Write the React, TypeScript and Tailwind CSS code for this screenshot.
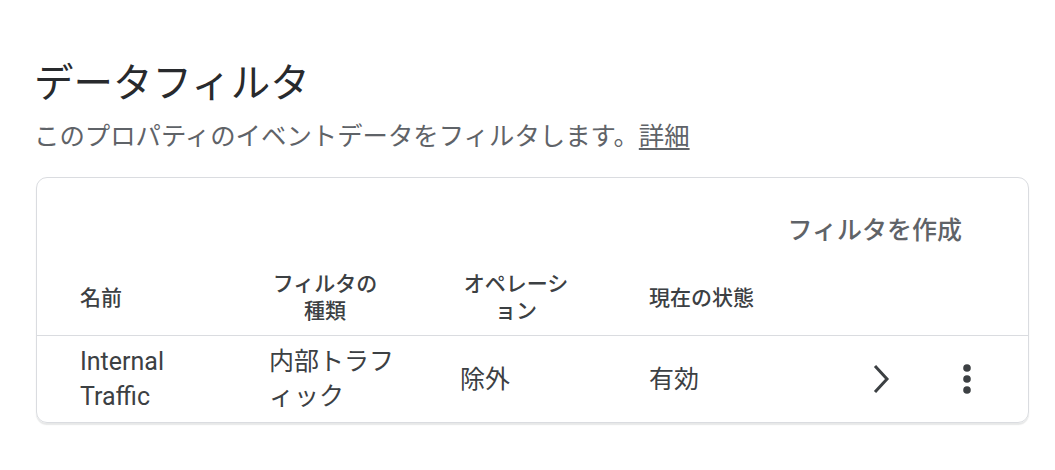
import React from "react";

const font = { fontFamily: 'Roboto, "Noto Sans CJK JP", sans-serif' };

function HeaderCell({ children }: { children: React.ReactNode }) {
  return (
    <div className="flex items-center">
      <span className="inline-block max-w-[112px] text-center text-[21px] leading-[27px] font-medium text-[#3c4043]">
        {children}
      </span>
    </div>
  );
}

export default function App() {
  return (
    <div className="w-[1055px] h-[470px] bg-white pl-[36px] pr-[26px] pt-[60px]" style={font}>
      <h1 className="-ml-[2px] text-[39.5px] leading-[48px] text-[#282a2d]">データフィルタ</h1>
      <p className="-ml-[2px] mt-[11px] text-[25.4px] leading-[34px] text-[#5f6368]">
        このプロパティのイベントデータをフィルタします。
        <a className="underline underline-offset-[3px] text-[#5f6368]">詳細</a>
      </p>

      <div className="mt-[24px] rounded-[11px] border border-[#dadce0] shadow-[0_2px_1px_rgba(60,64,67,0.12)] pt-[38px]">
        <div className="flex justify-end pr-[66px]">
          <button className="text-[25px] leading-[30px] font-medium text-[#5f6368]">フィルタを作成</button>
        </div>

        <div className="grid grid-cols-[189px_191px_189px_200px_1fr] pl-[43px] pt-[25px] pb-[10px] border-b border-[#dadce0]">
          <HeaderCell>名前</HeaderCell>
          <HeaderCell>フィルタの種類</HeaderCell>
          <HeaderCell>オペレーション</HeaderCell>
          <HeaderCell>現在の状態</HeaderCell>
          <div />
        </div>

        <div className="grid grid-cols-[189px_191px_189px_200px_1fr] pl-[43px] py-[8px] items-center text-[25px] leading-[35px] text-[#3c4043]">
          <div className="pr-[50px]">Internal Traffic</div>
          <div className="pr-[50px]">内部トラフィック</div>
          <div>除外</div>
          <div>有効</div>
          <div className="flex items-center">
            <button className="ml-[20px] w-[24px] h-[34px] flex items-center justify-center">
              <svg width="20" height="30" viewBox="0 0 20 30">
                <polyline points="4,2 16,15 4,28" fill="none" stroke="#3c4043" strokeWidth="3" />
              </svg>
            </button>
            <button className="ml-[67px] w-[14px] h-[34px] flex items-center justify-center">
              <svg width="10" height="32" viewBox="0 0 10 32">
                <circle cx="5" cy="5" r="3.8" fill="#3c4043" />
                <circle cx="5" cy="16" r="3.8" fill="#3c4043" />
                <circle cx="5" cy="27" r="3.8" fill="#3c4043" />
              </svg>
            </button>
          </div>
        </div>
      </div>
    </div>
  );
}
